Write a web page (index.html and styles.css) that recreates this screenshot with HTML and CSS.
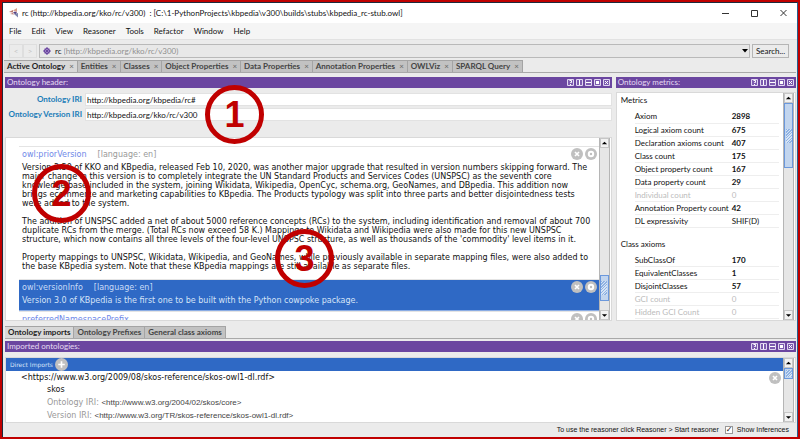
FILE: index.html
```html
<!DOCTYPE html>
<html lang="en">
<head>
<meta charset="utf-8">
<title>rc ontology editor</title>
<link rel="stylesheet" href="styles.css">
</head>
<body>
<svg class="defs" aria-hidden="true">
  <symbol id="x" viewBox="0 0 12 12"><circle cx="6" cy="6" r="6" fill="#c0c0c0"/><path d="M4 4l4 4M8 4l-4 4" stroke="#fff" stroke-width="1.6"/></symbol>
  <symbol id="o" viewBox="0 0 12 12"><circle cx="6" cy="6" r="6" fill="#c0c0c0"/><circle cx="6" cy="6" r="2.2" fill="none" stroke="#fff" stroke-width="2"/></symbol>
  <symbol id="plus" viewBox="0 0 12 12"><circle cx="6" cy="6" r="6" fill="#c0c0c0"/><path d="M6 3v6M3 6h6" stroke="#fff" stroke-width="1.5"/></symbol>
  <symbol id="tools" viewBox="0 0 43 7"><path d="M.5.5h6v6h-6zM9.500.5h6v6h-6zM18.500.5h6v6h-6zM27.500.5h6v6h-6zM36.500.5h6v6h-6z" fill="#7d5cb0" stroke="#e0d6f0"/><path d="M2.500 1.500h2v2h-1V4M3 5.500h1M12.500 1v5M19 3.500h5M38 2l3 3M41 2l-3 3" fill="none" stroke="#fff"/><path d="M29 2h3v3h-3z" fill="#fff"/></symbol>
  <symbol id="up" viewBox="0 0 8 8"><path d="M1 5.500h6l-3-3z"/></symbol>
  <symbol id="down" viewBox="0 0 8 8"><path d="M1 3h6L4 6z"/></symbol>
</svg>
<div class="window">
  <header class="titlebar">
    <svg class="logo" viewBox="0 0 10 10"><path d="M0 4l4-2v2.500zM1 6l3-1 1 1.500z" fill="#b8746a"/><path d="M4 2.500L8 0v4z" fill="#d9a08c"/><path d="M4 4.500l2-1 2 1-1.500 2z" fill="#5a4384"/><path d="M5 6l4-1v4.500z" fill="#7e86ad"/></svg>
    <h1>rc (http://kbpedia.org/kko/rc/v300) &nbsp;: [C:\1-PythonProjects\kbpedia\v300\builds\stubs\kbpedia_rc-stub.owl]</h1>
    <div class="winbtns">
      <button aria-label="Minimize"><svg viewBox="0 0 8 8"><path d="M0 4.500h7"/></svg></button>
      <button aria-label="Maximize"><svg viewBox="0 0 8 8"><path d="M.5 1.500h6v6h-6z"/></svg></button>
      <button aria-label="Close"><svg viewBox="0 0 8 8"><path d="M.5 1l6 6M6.500 1l-6 6"/></svg></button>
    </div>
  </header>
  <nav class="menu"><button>File</button><button>Edit</button><button>View</button><button>Reasoner</button><button>Tools</button><button>Refactor</button><button>Window</button><button>Help</button></nav>
  <div class="toolbar">
    <button class="nav" aria-label="Back">&lt;</button><button class="nav" aria-label="Forward">&gt;</button>
    <div class="combo">
      <svg viewBox="0 0 8 8"><path d="M4 0l1.500 1.500h1v1L8 4 6.500 5.500v1h-1L4 8 2.500 6.500h-1v-1L0 4l1.500-1.500v-1h1z" fill="#6b46a0"/><path d="M4 2l2 2-2 2-2-2z" fill="#c9bae2"/><path d="M3 3h2v2H3z" fill="#6b46a0"/></svg>
      <label for="iri">rc</label>
      <select id="iri"><option>(http://kbpedia.org/kko/rc/v300)</option></select>
      <svg class="arrow" viewBox="0 0 6 4"><path d="M0 0h6L3 3.500z"/></svg>
    </div>
    <button class="search">Search...</button>
  </div>
  <nav class="tabs">
    <button class="on">Active Ontology<i>×</i></button><button>Entities<i>×</i></button><button>Classes<i>×</i></button><button>Object Properties<i>×</i></button><button>Data Properties<i>×</i></button><button>Annotation Properties<i>×</i></button><button>OWLViz<i>×</i></button><button>SPARQL Query<i>×</i></button>
  </nav>
  <main class="columns">
    <section class="left">
      <h2 class="bar">Ontology header:<svg><use href="#tools"/></svg></h2>
      <form class="iris">
        <label for="a">Ontology IRI</label><input id="a" value="http://kbpedia.org/kbpedia/rc#">
        <label for="b">Ontology Version IRI</label><input id="b" value="http://kbpedia.org/kko/rc/v300">
      </form>
      <div class="box notes">
        <div class="content">
          <article class="note">
            <h3>owl:priorVersion<span>[language: en]</span></h3>
            <div class="acts"><svg><use href="#x"/></svg><svg><use href="#o"/></svg></div>
            <p>Version 2.50 of KKO and KBpedia, released Feb 10, 2020, was another major upgrade that resulted in version numbers skipping forward. The<br>major change in this version is to completely integrate the UN Standard Products and Services Codes (UNSPSC) as the seventh core<br>knowledge base included in the system, joining Wikidata, Wikipedia, OpenCyc, schema.org, GeoNames, and DBpedia. This addition now<br>brings ecommerce and marketing capabilities to KBpedia. The Products typology was split into three parts and better disjointedness tests<br>were added to the system.</p>
            <p>The addition of UNSPSC added a net of about 5000 reference concepts (RCs) to the system, including identification and removal of about 700<br>duplicate RCs from the merge. (Total RCs now exceed 58 K.) Mappings to Wikidata and Wikipedia were also made for this new UNSPSC<br>structure, which now contains all three levels of the four-level UNSPSC structure, as well as thousands of the 'commodity' level items in it.</p>
            <p>Property mappings to UNSPSC, Wikidata, Wikipedia, and GeoNames, while previously available in separate mapping files, were also added to<br>the base KBpedia system. Note that these KBpedia mappings are still available as separate files.</p>
          </article>
          <article class="note picked">
            <h3>owl:versionInfo<span>[language: en]</span></h3>
            <div class="acts"><svg><use href="#x"/></svg><svg><use href="#o"/></svg></div>
            <p>Version 3.0 of KBpedia is the first one to be built with the Python cowpoke package.</p>
          </article>
          <article class="note">
            <h3>preferredNamespacePrefix</h3>
            <div class="acts"><svg><use href="#x"/></svg><svg><use href="#o"/></svg></div>
          </article>
        </div>
        <div class="scroll end"><button aria-label="Scroll up"><svg><use href="#up"/></svg></button><div class="track"><div class="thumb small"></div></div><button aria-label="Scroll down"><svg><use href="#down"/></svg></button></div>
      </div>
    </section>
    <section class="right">
      <h2 class="bar">Ontology metrics:<svg><use href="#tools"/></svg></h2>
      <div class="box metrics">
        <div class="content">
          <table>
            <caption>Metrics</caption>
            <tr><th>Axiom</th><td>2898</td></tr>
            <tr><th>Logical axiom count</th><td>675</td></tr>
            <tr><th>Declaration axioms count</th><td>407</td></tr>
            <tr><th>Class count</th><td>175</td></tr>
            <tr><th>Object property count</th><td>167</td></tr>
            <tr><th>Data property count</th><td>29</td></tr>
            <tr class="zero"><th>Individual count</th><td>0</td></tr>
            <tr><th>Annotation Property count</th><td>42</td></tr>
            <tr class="plain"><th>DL expressivity</th><td>SHIF(D)</td></tr>
          </table>
          <table>
            <caption>Class axioms</caption>
            <tr><th>SubClassOf</th><td>170</td></tr>
            <tr><th>EquivalentClasses</th><td>1</td></tr>
            <tr><th>DisjointClasses</th><td>57</td></tr>
            <tr class="zero"><th>GCI count</th><td>0</td></tr>
            <tr class="zero"><th>Hidden GCI Count</th><td>0</td></tr>
          </table>
        </div>
        <div class="scroll"><button aria-label="Scroll up"><svg><use href="#up"/></svg></button><div class="track"><div class="thumb large"></div></div><button aria-label="Scroll down"><svg><use href="#down"/></svg></button></div>
      </div>
    </section>
  </main>
  <nav class="tabs lower"><button class="on">Ontology imports</button><button>Ontology Prefixes</button><button>General class axioms</button></nav>
  <section class="imports">
    <h2 class="bar">Imported ontologies:<svg><use href="#tools"/></svg></h2>
    <div class="box">
      <div class="content">
        <h3 class="direct">Direct Imports <svg><use href="#plus"/></svg></h3>
        <div class="import">
          <div class="acts"><svg><use href="#x"/></svg></div>
          <p class="uri">&lt;https://www.w3.org/2009/08/skos-reference/skos-owl1-dl.rdf&gt;</p>
          <p class="name">skos</p>
          <p class="meta">Ontology IRI: <span>&lt;http://www.w3.org/2004/02/skos/core&gt;</span></p>
          <p class="meta">Version IRI: <span>&lt;http://www.w3.org/TR/skos-reference/skos-owl1-dl.rdf&gt;</span></p>
        </div>
      </div>
      <div class="scroll"><button aria-label="Scroll up"><svg><use href="#up"/></svg></button><div class="track"><div class="thumb tiny"></div></div><button aria-label="Scroll down"><svg><use href="#down"/></svg></button></div>
    </div>
  </section>
  <footer><span>To use the reasoner click Reasoner &gt; Start reasoner</span><input type="checkbox" id="inf" checked><label for="inf">Show Inferences</label></footer>
</div>
<div class="mark one">1</div><div class="mark two">2</div><div class="mark three">3</div>
</body>
</html>
```

FILE: styles.css
```css
* { box-sizing: border-box; margin: 0; padding: 0; }
body { height: 100vh; background: #c00000; padding: 2px; font: 8px/12px Lato, Roboto, sans-serif; color: #111; overflow: hidden; }
button, input, select { font: inherit; color: inherit; border: 0; background: none; border-radius: 0; }
h1, h2, h3 { font: inherit; }
.defs { position: absolute; width: 0; height: 0; }
.window { height: 100%; display: flex; flex-direction: column; background: #ebebeb; border: 1px solid #1b2a3d; border-right-color: #26608f; border-bottom: 0; }
.titlebar { height: 20px; flex: none; background: #fff; display: flex; align-items: center; padding: 0 9px 0 6px; }
.logo { width: 10px; height: 10px; margin-right: 3px; }
.titlebar h1 { flex: 1; white-space: nowrap; }
.winbtns { display: flex; gap: 21px; }
.winbtns button, .winbtns svg { width: 8px; height: 8px; display: block; }
.winbtns path { fill: none; stroke: #333; }
.menu { height: 17px; flex: none; background: #f5f5f5; border-bottom: 1px solid #e2e2e2; display: flex; align-items: center; gap: 10px; padding-left: 6px; }
.toolbar { height: 20px; flex: none; display: flex; align-items: center; padding: 2px 8px 0 6px; }
.nav { width: 14px; height: 14px; border: 1px solid #dedede; color: #c4c4c4; line-height: 10px; }
.combo { flex: 1; height: 14px; margin: 0 2px; border: 1px solid #b9b9b9; display: flex; align-items: center; padding-left: 3px; background: #e8e8e8; }
.combo svg { width: 8px; height: 8px; margin-right: 4px; }
.combo select { flex: 1; appearance: none; color: #909090; margin-left: 2px; height: 12px; }
.combo .arrow { width: 6px; height: 4px; margin-right: 1px; }
.search { width: 37px; height: 14px; border: 1px solid #b5b5b5; line-height: 12px; }
.tabs { display: flex; flex: none; font-weight: 700; border-bottom: 1px solid #a9a9a9; margin: 0 1px; }
.tabs button { height: 12px; line-height: 11px; background: #c2c2c2; border: solid #a4a4a4; border-width: 1px 1px 0 0; padding: 0 3px; color: #444; white-space: nowrap; }
.tabs button.on { background: #d8d8d8; color: #222; }
.tabs i { font-style: normal; font-weight: 400; color: #666; margin-left: 4px; }
.columns { flex: 1; min-height: 0; display: flex; gap: 4px; padding: 4px 1px 0 2px; }
.left, .right { display: flex; flex-direction: column; min-width: 0; }
.left { flex: 1; }
.right { width: 22.8%; }
.bar { height: 11px; flex: none; line-height: 11px; background: #6b46a0; color: #e6dcf3; display: flex; align-items: center; justify-content: space-between; padding: 0 2px; }
.bar svg { width: 43px; height: 7px; }
.iris { display: grid; grid-template-columns: 77px 1fr; gap: 2px; padding: 5px 0 16px; }
.iris label { text-align: right; color: #1a7cb8; font-weight: 700; line-height: 13px; white-space: nowrap; }
.iris input { height: 13px; background: #fff; border: 1px solid #e2e2e2; padding: 0 1px; margin-left: 1px; min-width: 0; }
.box { display: flex; background: #fff; border: 1px solid #d9d9d9; min-height: 0; flex: 1; }
.content { flex: 1; min-width: 0; overflow: hidden; }
.scroll { width: 11px; flex: none; display: flex; flex-direction: column; background: #e6e6e6; border: solid #b5b5b5; border-width: 0 1px; margin-right: 1px; }
.scroll button { height: 10px; background: #f2f2f2; border: 1px solid #c6c6c6; }
.scroll svg { display: block; width: 7px; height: 8px; }
.track { flex: 1; }
.thumb { border: 1px solid #6b98dc; background: #c2d5ee; display: flex; align-items: center; justify-content: center; }
.thumb::after { content: ""; width: 6px; height: 14px; max-height: 70%; background: repeating-linear-gradient(135deg, #8fb2e2 0 1px, #d6e4f6 1px 2px); }
.tiny { height: 11px; }
.small { height: 26px; }
.large { height: 65px; }
.end .track { display: flex; flex-direction: column; justify-content: flex-end; padding-bottom: 9px; }
.notes { font: 8px/9px "DejaVu Sans", sans-serif; }
.notes .content { padding: 8px 0 0 13px; }
.note { position: relative; border-top: 1px solid #e4e4e4; padding: 2px 2px 0 3px; }
.note h3 { color: #6e88e8; line-height: 11px; padding-bottom: 3px; }
.note h3 span { color: #999; margin-left: 11px; }
.note p { white-space: nowrap; padding-bottom: 9px; }
.note p:last-child { padding-bottom: 8px; }
.picked { background: #2f69c5; color: #d6e4f8; border-bottom: 1px solid #8aace4; }
.picked h3, .picked h3 span { color: #c9dcf8; }
.note.picked p { padding-bottom: 5px; }
.acts { position: absolute; right: 2px; top: 1px; display: flex; gap: 2px; }
.acts svg { width: 12px; height: 12px; }
.metrics { margin-top: 4px; }
.metrics .content { padding: 0 4px; }
.metrics table { width: 100%; border-collapse: collapse; margin-bottom: 9px; }
.metrics caption { text-align: left; line-height: 14px; padding-bottom: 3px; }
.metrics tr::before { content: ""; display: table-cell; width: 14px; }
.metrics th { font-weight: 400; text-align: left; width: 97px; }
.metrics th, .metrics td { height: 13px; line-height: 12px; border-bottom: 1px solid #eee; white-space: nowrap; }
.metrics td { font-weight: 700; }
.metrics .zero { color: #bbb; }
.metrics .zero td, .metrics .plain td { font-weight: 400; }
.lower { margin-top: 5px; margin-left: 2px; }
.imports { flex: none; padding: 2px 1px 0 2px; }
.imports .box { margin-top: 5px; }
.direct { background: #2f69c5; color: #d6e4f8; font: 6px/13px "DejaVu Sans", sans-serif; display: flex; align-items: center; gap: 2px; padding-left: 4px; height: 13px; }
.direct svg { width: 13px; height: 13px; }
.import { position: relative; font: 8px/12px "DejaVu Sans", sans-serif; padding: 1px 0 0 15px; }
.name { padding-left: 26px; }
.meta { padding-left: 26px; color: #999; line-height: 13px; }
.meta span { color: #444; font-family: "Liberation Sans", sans-serif; }
footer { flex: none; height: 14px; display: flex; align-items: center; justify-content: flex-end; font: 7px/12px "Liberation Sans", sans-serif; padding-right: 8px; }
footer input { appearance: none; width: 8px; height: 8px; margin: 0 4px 0 6px; background: #fff; border: 1px solid #999; font: bold 8px/6px "DejaVu Sans", sans-serif; }
footer input:checked::before { content: "✓"; display: block; color: #111; }
.mark { position: absolute; width: 59px; height: 59px; border: 5px solid #c00000; border-radius: 50%; color: #c00000; font: bold 36px/49px "Liberation Sans", sans-serif; text-align: center; }
.one { left: 205px; top: 85px; }
.two { left: 32px; top: 164px; }
.three { left: 275px; top: 229px; }
```
